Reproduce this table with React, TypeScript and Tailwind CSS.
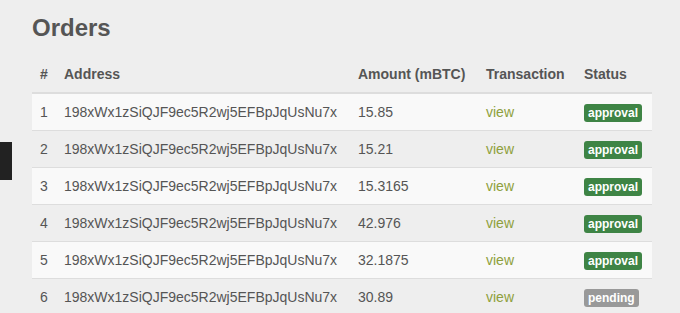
import React from "react";

const orders = [
  { id: 1, amount: "15.85", status: "approval" },
  { id: 2, amount: "15.21", status: "approval" },
  { id: 3, amount: "15.3165", status: "approval" },
  { id: 4, amount: "42.976", status: "approval" },
  { id: 5, amount: "32.1875", status: "approval" },
  { id: 6, amount: "30.89", status: "pending" },
];

const address = "198xWx1zSiQJF9ec5R2wj5EFBpJqUsNu7x";

function Label({ status }: { status: string }) {
  const color = status === "approval" ? "bg-[#3e8445]" : "bg-[#999999]";
  return (
    <span
      className={`${color} inline-block rounded-[3px] px-[4px] pt-[3px] pb-[3px] text-[12px] font-bold leading-none text-white align-baseline`}
    >
      {status}
    </span>
  );
}

export default function App() {
  return (
    <div className="relative min-h-[313px] overflow-hidden bg-[#eeeeee] font-['Liberation_Sans',Arial,sans-serif] text-[14px] text-[#555555]">
      <div className="absolute left-0 top-[142px] h-[38px] w-[12px] bg-[#222222]" />

      <div className="ml-[32px] w-[620px]">
        <h2 className="mt-[15px] mb-[15px] text-[24px] font-bold leading-[26px] text-[#555555]">
          Orders
        </h2>

        <table className="w-full table-fixed border-collapse">
          <thead>
            <tr className="text-left">
              <th className="w-[24px] border-b-2 border-[#dddddd] px-2 py-2 leading-5 font-bold">#</th>
              <th className="w-[294px] border-b-2 border-[#dddddd] px-2 py-2 leading-5 font-bold">Address</th>
              <th className="w-[128px] border-b-2 border-[#dddddd] px-2 py-2 leading-5 font-bold">Amount (mBTC)</th>
              <th className="w-[98px] border-b-2 border-[#dddddd] px-2 py-2 leading-5 font-bold">Transaction</th>
              <th className="w-[76px] border-b-2 border-[#dddddd] px-2 py-2 leading-5 font-bold">Status</th>
            </tr>
          </thead>
          <tbody>
            {orders.map((o) => (
              <tr key={o.id} className={o.id % 2 === 1 ? "bg-[#f9f9f9]" : ""}>
                <td className="border-t border-[#dddddd] px-2 py-2 leading-5">{o.id}</td>
                <td className="border-t border-[#dddddd] px-2 py-2 leading-5 whitespace-nowrap">{address}</td>
                <td className="border-t border-[#dddddd] px-2 py-2 leading-5">{o.amount}</td>
                <td className="border-t border-[#dddddd] px-2 py-2 leading-5">
                  <a href="#" className="text-[#8ea03c]">view</a>
                </td>
                <td className="border-t border-[#dddddd] px-2 py-2 leading-5">
                  <Label status={o.status} />
                </td>
              </tr>
            ))}
          </tbody>
        </table>
      </div>
    </div>
  );
}
